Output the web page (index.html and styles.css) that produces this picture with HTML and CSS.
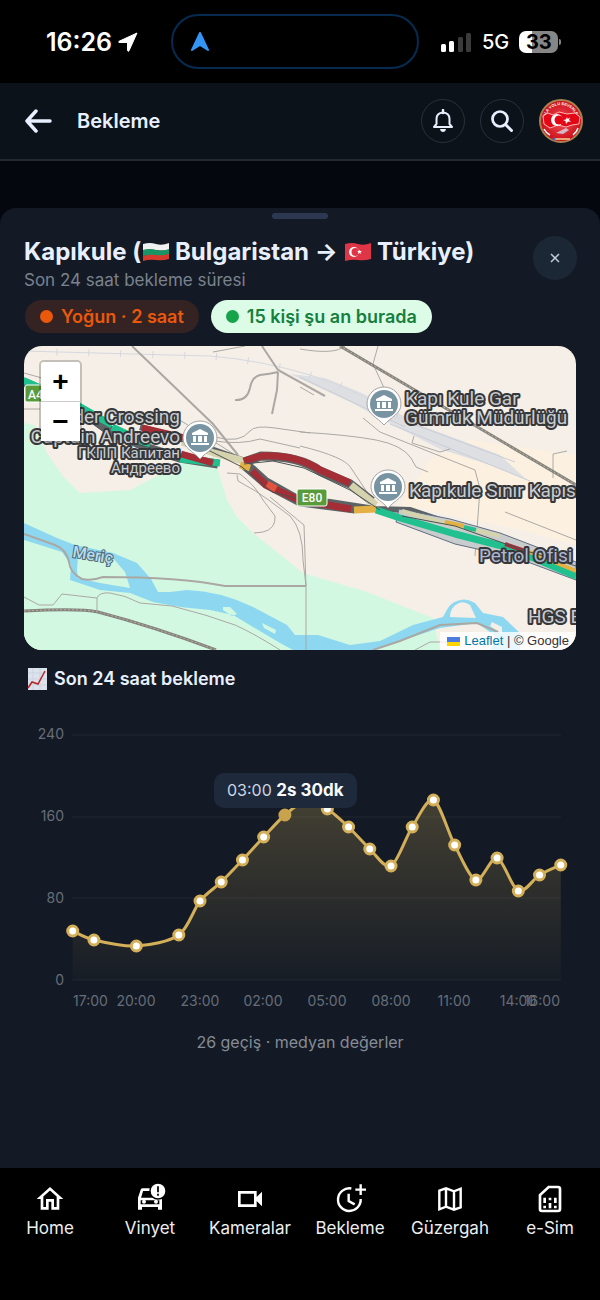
FILE: index.html
```html
<!DOCTYPE html>
<html lang="tr">
<head>
    <meta charset="UTF-8">
    <meta name="viewport" content="width=device-width, initial-scale=1.0">
    <title>Bekleme</title>
    <link rel="stylesheet" href="styles.css">
</head>
<body>
    <div class="status-bar">
        <div class="status-time">
            <span>16:26</span>
            <svg width="20" height="20" viewBox="0 0 20 20"><path d="M19 1L1 9.300Q0 10 1 10.500H9.500V18.500Q10 20 11 18.800Z" fill="#fff" stroke="#fff" stroke-linejoin="round"/></svg>
        </div>
        <div class="island">
            <svg width="18" height="20" viewBox="0 0 18 20"><path d="M9 1L17 18L9 13L1 18Z" fill="#3395f5" stroke="#3395f5" stroke-width="2" stroke-linejoin="round"/></svg>
        </div>
        <div class="status-icons">
            <svg width="32" height="20" viewBox="0 0 32 20">
                <rect x="1" y="12" width="5" height="8" rx="1.500" fill="#fff"/>
                <rect x="9" y="9" width="5" height="11" rx="1.500" fill="#fff"/>
                <rect x="18" y="5" width="5" height="15" rx="1.500" fill="#3b3b3b"/>
                <rect x="26" y="1" width="5" height="19" rx="1.500" fill="#3b3b3b"/>
            </svg>
            <span>5G</span>
            <span class="battery">33</span>
        </div>
    </div>

    <header class="header">
        <button type="button" class="back" aria-label="Geri">
            <svg width="28" height="24" viewBox="0 0 28 24"><path d="M12 2L3 12L12 22M3 12H26" fill="none" stroke="#e8f0ff" stroke-width="3.500" stroke-linecap="round" stroke-linejoin="round"/></svg>
        </button>
        <h1>Bekleme</h1>
        <button type="button" class="round-button" aria-label="Bildirimler">
            <svg width="24" height="24" viewBox="0 0 24 24"><path d="M3 18H21L18.500 15V10Q18.500 4 12 3.500Q5.500 4 5.500 10V15Z" fill="none" stroke="#e8f0ff" stroke-width="2" stroke-linejoin="round"/><path d="M12 1V4" stroke="#e8f0ff" stroke-width="2.500" stroke-linecap="round"/><path d="M9 20H15Q14.500 23 12 23T9 20" fill="#e8f0ff"/></svg>
        </button>
        <button type="button" class="round-button" aria-label="Ara">
            <svg width="24" height="24" viewBox="0 0 24 24"><circle cx="10" cy="10" r="7.500" fill="none" stroke="#e8f0ff" stroke-width="2.700"/><path d="M16 16L21.500 21.500" stroke="#e8f0ff" stroke-width="3" stroke-linecap="round"/></svg>
        </button>
        <button type="button" class="avatar" aria-label="Profil">
            <svg width="44" height="44" viewBox="0 0 44 44">
                <defs>
                    <radialGradient id="avatarRed"><stop offset="0" stop-color="#f2525a"/><stop offset="1" stop-color="#c90d18"/></radialGradient>
                    <path id="avatarArc" d="M6 22A16 16 0 0 1 38 22"/>
                </defs>
                <circle cx="22" cy="22" r="21" fill="url(#avatarRed)" stroke="#a9814f" stroke-width="2"/>
                <text font-size="4" font-weight="700" fill="#fff"><textPath href="#avatarArc" startOffset="50%" text-anchor="middle">SILA YOLU SEVENLER</textPath></text>
                <path d="M4 17L9 14L14 16L20 13L28 15L36 14L41 18L40 25L33 26L27 28L19 26L11 29L5 25Z" fill="#e30716" stroke="#ffb5b2" stroke-width="1"/>
                <circle cx="18" cy="21" r="6" fill="#fff"/><circle cx="20" cy="21" r="4.500" fill="#e30716"/>
                <path d="M28 18L26.900 20.500L24 21L26.500 22L27 25L29 22.500L32 23L30 21L31 18.500L28.700 20Z" fill="#fff"/>
                <path d="M17 34L27 29L30 31L24 35Z" fill="#d6b9c4"/><path d="M5 30Q7 34 11 36M34 36Q38 33 39 29" stroke="#fff" stroke-width="1.500" fill="none"/>
                <path d="M14 40H31" stroke="#eaa477" stroke-width="2"/><circle cx="15" cy="40" r="1.500" fill="#4561b9"/>
            </svg>
        </button>
    </header>

    <main class="sheet">
        <span class="handle"></span>
        <div class="sheet-head">
            <div class="sheet-title">
                <h2>Kapıkule (<svg class="flag" width="26" height="20" viewBox="0 0 26 20"><path d="M0 2Q7 0 13 2T26 1V8Q19 9 13 8T0 8Z" fill="#f1f1f1"/><path d="M0 8Q7 6 13 8T26 7V13Q19 15 13 14T0 14Z" fill="#199464"/><path d="M0 14Q7 12 13 13T26 12V17Q19 19 13 18T0 19Z" fill="#d63a2c"/></svg> Bulgaristan → <svg class="flag" width="26" height="20" viewBox="0 0 26 20"><path d="M0 2Q7 0 13 2T26 1V17Q19 19 13 18T0 19Z" fill="#df3546"/><circle cx="9" cy="10" r="5" fill="#fff"/><circle cx="10.500" cy="10" r="4" fill="#df3546"/><path d="M14 7.500L15 9L17 9L15.500 10.200L16 12L14.500 11L13 12L13.400 10L12 9H13.500Z" fill="#fff"/></svg> Türkiye)</h2>
                <p>Son 24 saat bekleme süresi</p>
            </div>
            <button type="button" class="close" aria-label="Kapat">
                <svg width="10" height="10" viewBox="0 0 10 10"><path d="M1 1L9 9M9 1L1 9" stroke="#c3cbd8" stroke-width="1.500"/></svg>
            </button>
        </div>
        <div class="chips">
            <span class="chip chip-busy">Yoğun · 2 saat</span>
            <span class="chip chip-people">15 kişi şu an burada</span>
        </div>

        <div class="map">
            <svg class="map-canvas" viewBox="24 346 552 304">
                <rect x="24" y="346" width="552" height="304" fill="#f5efe7"/>
                <path d="M430 460L470 440L576 455V545L520 530L400 505Z" fill="#fcf1e1"/>
                <!-- fields -->
                <path d="M24 423L35 425L47 453L62 475L80 493L130 490L153 478L185 462L217 467L227 500L237 517L253 533L303 573L367 592L433 618L440 650H24Z" fill="#d3f8e2"/>
                <!-- railway yard -->
                <path d="M290 374L325 378L362 393L420 425L500 455L527 480L490 465L440 449L395 426L350 402Z" fill="#dedfe2"/>
                <path d="M390 424L530 481M405 421L515 462M300 377L405 427" stroke="#c9cdd7" fill="none"/>
                <path d="M24 351Q130 354 210 356Q260 360 310 375T400 419" class="rail"/>
                <path d="M24 351Q130 354 210 356Q260 360 310 375T400 419" class="rail ties"/>
                <!-- river -->
                <path class="water" fill-rule="evenodd" d="M24 523L57 538L75 545L113 553L137 563L151 579L158 592H170L187 590Q220 591 253 607L287 625L295 635H318L350 645L380 641L413 625L443 617Q450 602 457 601Q466 597 475 603L483 613L503 617L520 633V650H490L497 637L477 623L440 628L400 641L373 650H293L280 643L253 627L233 615L210 610L180 607L153 602L130 593L100 590L70 580L71 565L62 552L40 545L24 540ZM78 557L113 558L125 572L130 588L100 583L78 578L77 570ZM450 617Q450 608 457 604Q463 600 470 605L476 618ZM223 607L230 607L237 614L232 616L223 610ZM262 623L276 630L275 634L264 628ZM492 622L502 627V634L490 626Z"/>
                <!-- small roads -->
                <g class="road">
                    <path d="M24 373L42 378L70 390M24 409H40"/>
                    <path d="M262 346L278 370L325 396M278 372Q270 374 260 375Q252 377 250 388Q247 401 235 400M278 372L277 390L272 414" stroke-width="2"/>
                    <path d="M213 352L245 346M300 349Q335 355 345 346M378 346L373 364L385 390M300 387L314 395M388 387L380 405M363 418L380 432L475 470L480 489L475 556M300 432Q350 435 376 440T411 458L416 467L428 472M414 436L412 443L440 452L450 449M553 478V454L567 451M300 446Q345 457 351 468L361 483L371 498"/>
                    <path d="M215 437Q240 444 250 431Q255 425 275 428L310 433M215 441Q240 445 260 439L300 448"/>
                    <path d="M227 473L240 474Q255 485 263 500L275 516Q276 529 263 532L254 533M237 475L238 481Q257 491 270 501L290 516Q303 530 303 560L306 586V650M270 497L304 525L306 586"/>
                    <path d="M24 534L55 545Q67 550 69 562Q70 573 82 579Q92 581 103 577Q180 577 225 586H306" stroke-width="2"/>
                    <path d="M24 597L39 605H53L62 594L97 598V610M97 598Q99 592 110 593Q125 595 140 603L172 606L205 615L235 625Q255 634 280 650M415 650L430 642H450"/>
                    <path d="M373 650L400 641L440 625L477 623L498 632" stroke-width="2"/>
                    <path d="M132 346L213 424L238 455" stroke-width="2"/><path d="M175 417L240 458M505 512L576 540" />
                </g>
                <path class="railway" d="M24 611Q80 608 98 612Q155 627 216 650M340 346L576 485"/>
                <path class="railway-dash" d="M24 611Q80 608 98 612Q155 627 216 650M340 346L576 485"/>
                <!-- motorway with live traffic -->
                <path class="casing" d="M24 382L70 403L108 429L145 447L180 458L218 464"/>
                <path class="flow green" d="M20 379L70 401L112 425"/>
                <path class="flow green" d="M112 427L150 445M180 459L220 463"/>
                <path class="casing thin" d="M140 427L185 440L214 450L245 461L266 480L298 498L330 502L375 509L410 510L470 530L520 545L576 571"/>
                <path class="flow red" d="M142 428L184 438M181 454L213 463"/>
                <path class="flow sand" d="M182 442L214 453L244 461"/>
                <path class="casing" d="M244 462L261 456Q300 456 320 471L350 484L372 501M244 465L266 484L300 502L355 509"/>
                <path class="flow red" d="M244 461L261 456Q295 454 320 470L350 483"/>
                <path class="flow red" d="M252 471L266 485L299 500L351 509"/>
                <path class="flow sand" d="M351 485L376 505"/>
                <path class="flow amber" d="M240 465L250 468M354 510L376 509"/>
                <path d="M267 484L276 489" class="flow orange"/>
                <path class="frontage" d="M399 509L450 519L500 533L576 562V580L517 558L455 544L396 522Z"/>
                <path class="flow green" d="M376 510L400 518L455 534L510 548L576 576"/>
                <path class="flow sand narrow" d="M402 511L445 523L500 536"/>
                <path class="flow amber narrow" d="M445 522L464 526M530 552L576 571"/>
                <path class="flow green narrow" d="M464 527L476 530"/><path class="flow red narrow" d="M505 544L525 551"/>
                <path class="lane" d="M25 390L75 411L112 438L163 451M153 431L210 451L242 467L272 492L330 507M244 464L273 461L304 468L350 490L380 510M402 516L455 526L520 549L576 566"/>
                <!-- place pins -->
                <g>
                    <g transform="translate(200 438)"><path class="pin" d="M-17 0A17 17 0 1 1 17 0C17 10 7 13 0 21C-7 13 -17 10 -17 0Z"/><circle r="14" class="pin-face"/><path class="pin-icon" d="M-8 -3V-5L0 -9L8 -5V-3ZM-7 -2H-4V4H-7ZM-2 -2H2V4H-2ZM4 -2H7V4H4ZM-9 5H9V7H-9Z"/></g>
                    <g transform="translate(384 404)"><path class="pin" d="M-17 0A17 17 0 1 1 17 0C17 10 7 13 0 21C-7 13 -17 10 -17 0Z"/><circle r="14" class="pin-face"/><path class="pin-icon" d="M-8 -3V-5L0 -9L8 -5V-3ZM-7 -2H-4V4H-7ZM-2 -2H2V4H-2ZM4 -2H7V4H4ZM-9 5H9V7H-9Z"/></g>
                    <g transform="translate(388 487)"><path class="pin" d="M-17 0A17 17 0 1 1 17 0C17 10 7 13 0 21C-7 13 -17 10 -17 0Z"/><circle r="14" class="pin-face"/><path class="pin-icon" d="M-8 -3V-5L0 -9L8 -5V-3ZM-7 -2H-4V4H-7ZM-2 -2H2V4H-2ZM4 -2H7V4H4ZM-9 5H9V7H-9Z"/></g>
                </g>
                <!-- road shields -->
                <g class="shield">
                    <rect x="25" y="385" width="32" height="17" rx="2"/><text x="28" y="399">A4</text>
                    <rect x="297" y="489" width="30" height="17" rx="2"/><text x="312" y="502" text-anchor="middle">E80</text>
                </g>
                <g class="place">
                    <text x="180" y="423" text-anchor="end">Border Crossing</text>
                    <text x="180" y="443" text-anchor="end">Captain Andreevo</text>
                    <text x="180" y="458" text-anchor="end" class="small">ГКПП Капитан</text>
                    <text x="180" y="473" text-anchor="end" class="small">Андреево</text>
                    <text x="405" y="405">Kapı Kule Gar</text>
                    <text x="405" y="424">Gümrük Müdürlüğü</text>
                    <text x="409" y="497">Kapıkule Sınır Kapısı</text>
                    <text x="479" y="562" class="fuel">Petrol Ofisi</text>
                    <text x="528" y="623">HGS Bayi</text>
                </g>
                <text class="river-name" x="72" y="557" transform="rotate(9 72 557)">Meriç</text>
            </svg>
            <div class="zoom-control">
                <button type="button" aria-label="Yakınlaştır">+</button>
                <button type="button" aria-label="Uzaklaştır">−</button>
            </div>
            <div class="attribution">
                <svg width="13" height="9" viewBox="0 0 13 9"><path d="M0 0H13V5H0Z" fill="#4c7be1"/><path d="M0 5H13V9H0Z" fill="#ffd500"/></svg>
                <span><a href="#leaflet">Leaflet</a> | © Google</span>
            </div>
        </div>

        <h3>
            <svg width="20" height="22" viewBox="0 0 20 22"><rect x="1" width="19" height="22" fill="#dce3ec"/><path d="M1 5H20M1 11H20M1 17H20M6 0V22M13 0V22" stroke="#cbd5e1"/><path d="M1 20L5 14L11 16L18 3" fill="none" stroke="#b92525" stroke-width="1.500"/></svg>
            Son 24 saat bekleme
        </h3>

        <div class="chart">
            <svg viewBox="0 0 552 290" id="waitChart">
                <defs>
                    <linearGradient id="areaFill" x1="0" y1="0" x2="0" y2="1">
                        <stop offset="0" stop-color="#d4af5a" stop-opacity="0.250"/>
                        <stop offset="1" stop-color="#d4af5a" stop-opacity="0.020"/>
                    </linearGradient>
                </defs>
                <path class="grid" d="M48 15H537M48 97H537M48 178H537M48 260H537"/>
                <g class="axis" text-anchor="end">
                    <text x="40" y="19">240</text>
                    <text x="40" y="101">160</text>
                    <text x="40" y="183">80</text>
                    <text x="40" y="265">0</text>
                </g>
                <g class="axis" text-anchor="middle">
                    <text x="49" y="286" text-anchor="start">17:00</text>
                    <text x="112" y="286">20:00</text>
                    <text x="176" y="286">23:00</text>
                    <text x="239" y="286">02:00</text>
                    <text x="303" y="286">05:00</text>
                    <text x="367" y="286">08:00</text>
                    <text x="430" y="286">11:00</text>
                    <text x="494" y="286">14:00</text>
                    <text x="536" y="286" text-anchor="end">16:00</text>
                </g>
            </svg>
            <div class="tooltip">03:00 <strong>2s 30dk</strong></div>
        </div>
        <p class="summary">26 geçiş · medyan değerler</p>
    </main>

    <nav class="tabs">
        <a href="#home">
            <svg width="32" height="32" viewBox="0 0 24 24"><path d="M12 5.690L17 10.190V18H15V12H9V18H7V10.190L12 5.690M12 3L2 12H5V20H11V14H13V20H19V12H22Z"/></svg>
            Home
        </a>
        <a href="#vinyet">
            <svg width="32" height="32" viewBox="0 0 24 24"><path d="M12 4H6.500Q5.400 4 5 5L3 11V20H6V18H18V20H21V12L20.500 11H5.300L6.800 6H12ZM5 13H19V16H5Z" fill-rule="evenodd"/><circle cx="7.500" cy="14" r="1.500"/><circle cx="16.500" cy="14" r="1.500"/><circle cx="18" cy="6" r="6" stroke="#000"/><path d="M18 2.500V7M18 8V9.500" stroke="#000" stroke-width="1.300"/></svg>
            Vinyet
        </a>
        <a href="#kameralar">
            <svg width="32" height="32" viewBox="0 0 24 24"><path d="M15 8V16H5V8H15M17 6H3V18H17V13.500L21 17.500V6.500L17 10.500Z"/></svg>
            Kameralar
        </a>
        <a href="#bekleme">
            <svg width="32" height="32" viewBox="0 0 24 24"><path d="M13 4.100A8.500 8.500 0 1 0 20 12M11 8V13.500L15.500 16M20 1V9M16 5H24" fill="none" stroke="#fff" stroke-width="1.800"/></svg>
            Bekleme
        </a>
        <a href="#guzergah">
            <svg width="32" height="32" viewBox="0 0 24 24"><path d="M4 5.700L9 4L15 6.200L20 4.300V18.300L15 20L9 17.800L4 19.700ZM9 4V18M15 6V20" fill="none" stroke="#fff" stroke-width="1.800"/></svg>
            Güzergah
        </a>
        <a href="#esim">
            <svg width="32" height="32" viewBox="0 0 24 24"><path d="M11 3H18Q19.500 3 19.500 4.500V19.500Q19.500 21 18 21H6Q4.500 21 4.500 19.500V9Z" fill="none" stroke="#fff" stroke-width="2"/><path d="M7 11H9V15H7ZM7 17H9V19H7ZM11 11H13V13H11ZM11 15H13V19H11ZM15 11H17V15H15ZM15 17H17V19H15Z"/></svg>
            e-Sim
        </a>
    </nav>

    <script src="chart.js"></script>
</body>
</html>
```
FILE: styles.css
```css
body {
    font-family: Inter, "Noto Sans", sans-serif;
    margin: 0;
    min-height: 100vh;
    display: flex;
    flex-direction: column;
    background-color: #04070d;
    color: #e8f0ff;
}

h1, h2, h3, p {
    margin: 0;
}

svg {
    display: block;
    flex: none;
}

button {
    border: none;
    padding: 0;
    background: none;
    color: inherit;
    cursor: pointer;
}

/* Status bar */
.status-bar {
    height: 83px;
    padding-right: 10px;
    display: grid;
    grid-template-columns: 1fr 248px 1fr;
    align-items: center;
    background-color: #000;
    color: #fff;
}

.status-time {
    display: flex;
    align-items: center;
    justify-content: flex-end;
    gap: 6px;
    padding-right: 33px;
    font-size: 25px;
    font-weight: 600;
}

.island {
    height: 55px;
    box-sizing: border-box;
    display: flex;
    align-items: center;
    padding-left: 18px;
    border: 2px solid #062b50;
    border-radius: 28px;
}

.status-icons {
    display: flex;
    align-items: center;
    gap: 10px;
    padding-left: 21px;
    font-size: 20px;
    font-weight: 500;
}

.battery {
    position: relative;
    width: 39px;
    border-radius: 7px;
    background: linear-gradient(90deg, #fff 13px, #868686 13px);
    color: #000;
    font-weight: 700;
    line-height: 22px;
    text-align: center;
}

.battery::after {
    content: "";
    position: absolute;
    left: 40px;
    top: 8px;
    width: 2px;
    height: 6px;
    border-radius: 0 2px 2px 0;
    background-color: #868686;
}

/* Header */
.header {
    height: 76px;
    display: flex;
    align-items: center;
    padding: 0 17px 0 24px;
    border-bottom: 2px solid #23292f;
    background-color: #0b121a;
}

.header h1 {
    flex: 1;
    margin-left: 25px;
    font-size: 20px;
    font-weight: 600;
}

.round-button {
    width: 44px;
    height: 44px;
    margin-right: 15px;
    display: flex;
    align-items: center;
    justify-content: center;
    border: 1px solid #2a3038;
    border-radius: 50%;
    box-sizing: border-box;
}

/* Sheet */
.sheet {
    flex: 1;
    margin-top: 47px;
    padding: 5px 24px 24px;
    border-radius: 16px 16px 0 0;
    background-color: #131a25;
}

.handle {
    display: block;
    width: 56px;
    height: 6px;
    margin: 0 auto 17px;
    border-radius: 3px;
    background-color: #2e3752;
}

.sheet-head {
    display: flex;
    justify-content: space-between;
}

.sheet-title h2 {
    font-size: 24px;
    line-height: 31px;
    font-weight: 700;
}

.sheet-title p {
    font-size: 17px;
    line-height: 27px;
    color: #7b828d;
}

.flag {
    display: inline-block;
    margin-left: 2px;
    vertical-align: -2px;
}

.close {
    width: 44px;
    height: 44px;
    margin-right: -1px;
    display: flex;
    align-items: center;
    justify-content: center;
    border-radius: 50%;
    background-color: #1c2735;
}

.chips {
    display: flex;
    gap: 12px;
    margin: 6px 1px 13px;
}

.chip {
    display: flex;
    align-items: center;
    gap: 8px;
    padding: 0 15px;
    border-radius: 17px;
    font-size: 18px;
    line-height: 33px;
    font-weight: 600;
}

.chip::before {
    content: "";
    width: 13px;
    height: 13px;
    border-radius: 50%;
    background-color: #16a34a;
}

.chip-busy {
    background-color: #342322;
    color: #ea580c;
}

.chip-busy::before {
    background-color: #ea580c;
}

.chip-people {
    background-color: #dcfce7;
    color: #15803d;
}

/* Map */
.map {
    position: relative;
    overflow: hidden;
    border-radius: 18px;
    font-family: "Liberation Sans", Arial, sans-serif;
}

.map-canvas {
    width: 100%;
    height: auto;
}

.water { fill: #8dd8f0; }
.road { fill: none; stroke: #aba8a3; }
.rail { fill: none; stroke: #d5d8df; }
.ties { stroke-width: 7; stroke-dasharray: 1 31; }
.railway { fill: none; stroke: #85837b; stroke-width: 3; }
.railway-dash { fill: none; stroke: #b7b4a9; stroke-dasharray: 2 2; }
.casing { fill: none; stroke: #5d6365; stroke-width: 9; }
.thin { stroke-width: 6; }
.flow { fill: none; stroke-width: 7; stroke-linejoin: round; }
.narrow { stroke-width: 4; }
.green { stroke: #20c08f; }
.red { stroke: #a52d36; }
.amber { stroke: #e5b043; }
.orange { stroke: #e4533d; }
.sand { stroke: #d5d2ae; }
.frontage { fill: #c9cccd; stroke: #606d82; stroke-width: 1; }
.lane { fill: none; stroke: #4c5250; }

.pin { fill: #fff; stroke: #a3a3a3; }
.pin-face { fill: #7894a2; }
.pin-icon { fill: #fff; }

.shield rect { fill: #599b3b; stroke: #fff; }
.shield text {
    fill: #fff;
    font: 500 12px Roboto, sans-serif;
}

.place {
    font: 400 19px Roboto, sans-serif;
    fill: #c9cbce;
    stroke: #35373a;
    stroke-width: 4px;
    stroke-linejoin: round;
    paint-order: stroke;
}

.place .small {
    font-size: 15px;
}

.place .fuel {
    fill: #aeb8d4;
}

.river-name {
    font: 500 16px Roboto, sans-serif;
    fill: #b7dcec;
    stroke: #4d6874;
    stroke-width: 2px;
    paint-order: stroke;
}

.zoom-control {
    position: absolute;
    top: 14px;
    left: 15px;
    border: 2px solid rgba(0, 0, 0, 0.2);
    border-radius: 5px;
    background-clip: padding-box;
}

.zoom-control button {
    display: block;
    width: 39px;
    height: 39px;
    background-color: #fff;
    color: #000;
    font: bold 28px "Liberation Sans", Arial, sans-serif;
}

.zoom-control button:first-child {
    height: 40px;
    border-bottom: 1px solid #ccc;
    border-radius: 3px 3px 0 0;
}

.attribution {
    position: absolute;
    right: 0;
    bottom: 0;
    display: flex;
    align-items: center;
    gap: 4px;
    padding: 0 7px;
    background-color: rgba(255, 255, 255, 0.8);
    color: #333;
    font-size: 13px;
    line-height: 18px;
}

.attribution a {
    color: #0078a8;
    text-decoration: none;
}

/* Chart */
.sheet h3 {
    display: flex;
    align-items: center;
    gap: 7px;
    margin: 17px 3px 29px;
    font-size: 18px;
    line-height: 24px;
    font-weight: 600;
}

.chart {
    position: relative;
}

.chart svg {
    width: 100%;
    height: auto;
}

.grid { stroke: #202731; }
.axis { fill: #666d78; font-size: 14px; }
.area { fill: url(#areaFill); }
.line { fill: none; stroke: #d4af5a; stroke-width: 3; }
.dot { fill: #fff; stroke: #d4af5a; stroke-width: 3; }
.dot.active { fill: #c8a24d; stroke: #c8a24d; }

.tooltip {
    position: absolute;
    left: 190px;
    top: 53px;
    padding: 0 13px;
    border-radius: 10px;
    background-color: #1e293b;
    color: #cbd5e1;
    font-size: 16px;
    line-height: 35px;
}

.tooltip strong {
    color: #f8fafc;
    font-size: 17px;
    font-weight: 700;
}

.summary {
    margin-top: 20px;
    font-size: 16px;
    line-height: 24px;
    color: #858c97;
    text-align: center;
}

/* Bottom tabs */
.tabs {
    height: 132px;
    box-sizing: border-box;
    padding-top: 15px;
    display: grid;
    grid-template-columns: repeat(6, 1fr);
    background-color: #000;
}

.tabs a {
    display: flex;
    flex-direction: column;
    align-items: center;
    gap: 1px;
    color: #eee;
    font-size: 17px;
    line-height: 24px;
    text-decoration: none;
}

.tabs svg {
    fill: #fff;
}
```
FILE: chart.js
```js
// [hour slot, y in the chart's viewBox]
const points = [
    [0, 211], [1, 220], [3, 226], [5, 215], [6, 181], [7, 162], [8, 140], [9, 117],
    [10, 95], [11, 81], [12, 89], [13, 107], [14, 129], [15, 146], [16, 107], [17, 80],
    [18, 125], [19, 160], [20, 138], [21, 171], [22, 155], [23, 145]
].map(([slot, y]) => [48.700 + slot * 21.220, y]);

const ACTIVE = 8;
const SMOOTH = 0.15;
const chart = document.getElementById('waitChart');

function add(name, attrs) {
    const node = document.createElementNS('http://www.w3.org/2000/svg', name);
    for (const key in attrs) {
        node.setAttribute(key, attrs[key]);
    }
    chart.appendChild(node);
}

let line = 'M' + points[0];
for (let i = 1; i < points.length; i++) {
    const before = points[i - 2] || points[i - 1];
    const from = points[i - 1];
    const to = points[i];
    const after = points[i + 1] || to;
    const c1 = [from[0] + (to[0] - before[0]) * SMOOTH, from[1] + (to[1] - before[1]) * SMOOTH];
    const c2 = [to[0] - (after[0] - from[0]) * SMOOTH, to[1] - (after[1] - from[1]) * SMOOTH];
    line += 'C' + c1 + ' ' + c2 + ' ' + to;
}

const last = points[points.length - 1];
add('path', { class: 'area', d: line + 'V260H' + points[0][0] + 'Z' });
add('path', { class: 'line', d: line });
points.forEach(([x, y], i) => {
    add('circle', { class: i === ACTIVE ? 'dot active' : 'dot', cx: x, cy: y, r: 5 });
});
```
